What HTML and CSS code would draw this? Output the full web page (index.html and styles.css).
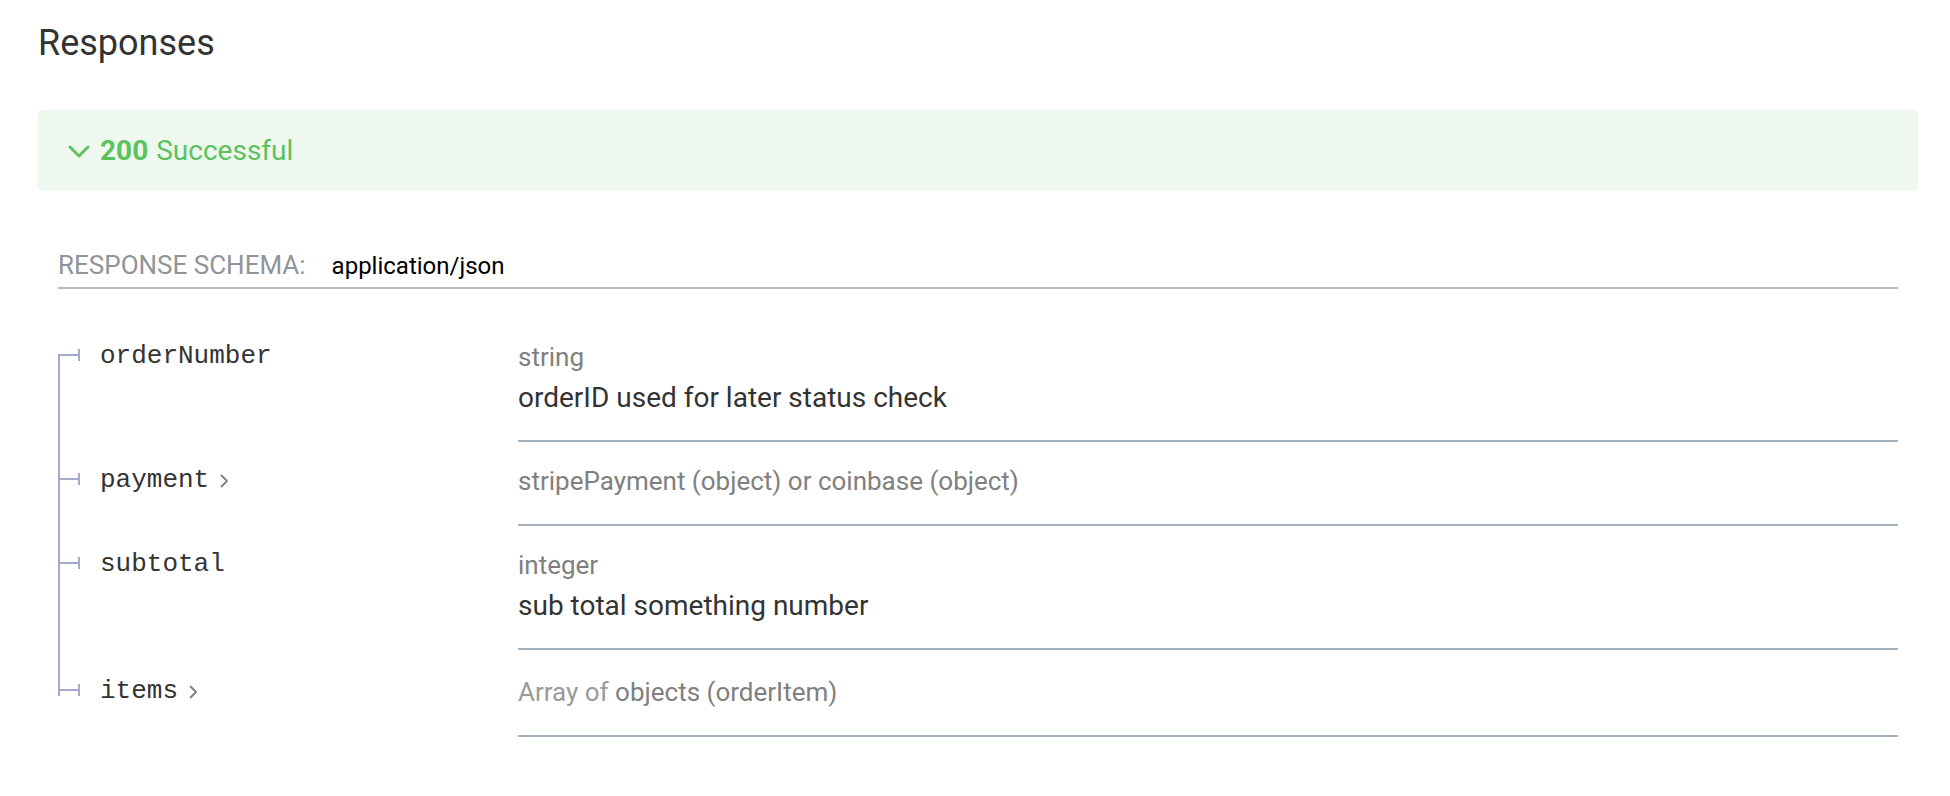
FILE: index.html
```html
<!DOCTYPE html>
<html>
<head>
<meta charset="utf-8">
<link rel="stylesheet" href="styles.css">
</head>
<body>
<div class="page">
  <h3 class="title">Responses</h3>
  <div class="resp-head">
    <svg class="chev" width="22" height="14" viewBox="0 0 22 14"><polyline points="2,2 11,11 20,2" fill="none" stroke="#5bc25e" stroke-width="3" stroke-linecap="round" stroke-linejoin="round"/></svg>
    <strong class="code">200</strong><span class="msg">Successful</span>
  </div>
  <div class="schema">
    <div class="schema-head">
      <span class="schema-label">RESPONSE SCHEMA:</span>
      <span class="schema-type">application/json</span>
    </div>
    <div class="fields">
      <div class="row first">
        <div class="name"><span class="pname">orderNumber</span></div>
        <div class="detail">
          <div class="type">string</div>
          <div class="desc">orderID used for later status check</div>
        </div>
      </div>
      <div class="row">
        <div class="name"><span class="pname">payment</span><svg class="arrow" width="11" height="16" viewBox="0 0 11 16"><polyline points="2.5,2.5 8,8 2.5,13.5" fill="none" stroke="#7d7d7d" stroke-width="1.8" stroke-linecap="round" stroke-linejoin="round"/></svg></div>
        <div class="detail">
          <div class="type">stripePayment (object) or coinbase (object)</div>
        </div>
      </div>
      <div class="row">
        <div class="name"><span class="pname">subtotal</span></div>
        <div class="detail">
          <div class="type">integer</div>
          <div class="desc">sub total something number</div>
        </div>
      </div>
      <div class="row last">
        <div class="name"><span class="pname">items</span><svg class="arrow" width="11" height="16" viewBox="0 0 11 16"><polyline points="2.5,2.5 8,8 2.5,13.5" fill="none" stroke="#7d7d7d" stroke-width="1.8" stroke-linecap="round" stroke-linejoin="round"/></svg></div>
        <div class="detail">
          <div class="type"><span class="muted">Array of </span>objects (orderItem)</div>
        </div>
      </div>
    </div>
  </div>
</div>
</body>
</html>
```

FILE: styles.css
```css
html, body {
  margin: 0;
  padding: 0;
  background: #ffffff;
}

body {
  font-family: Roboto, "Liberation Sans", sans-serif;
  color: #333333;
}

.page {
  padding: 21px 32px 0 38px;
}

.title {
  margin: 0;
  font-size: 36px;
  line-height: 44px;
  font-weight: 400;
  color: #333333;
}

.resp-head {
  margin-top: 45px;
  height: 81px;
  background: #eff8ef;
  border-radius: 4px;
  display: flex;
  align-items: center;
  padding-left: 30px;
  color: #5bc25e;
  font-size: 28px;
}

.chev {
  margin-right: 10px;
  margin-top: 2px;
}

.code {
  font-weight: 700;
  margin-right: 8px;
}

.msg {
  font-weight: 400;
}

.schema {
  padding: 0 20px;
}

.schema-head {
  margin-top: 59px;
  display: flex;
  align-items: baseline;
  line-height: 30px;
  padding-bottom: 6px;
  border-bottom: 2px solid #b8bcc1;
}

.schema-label {
  font-size: 26px;
  color: #8f9499;
  margin-right: 26px;
}

.schema-type {
  font-size: 24px;
  color: #000000;
}

.fields {
  margin-top: 29px;
}

.row {
  display: flex;
}

.name {
  width: 460px;
  flex: none;
  position: relative;
  box-sizing: border-box;
  padding: 22px 0 0 42px;
  display: flex;
  align-items: flex-start;
}

.last .name {
  padding-top: 25px;
}

.name::before {
  content: "";
  position: absolute;
  left: 0;
  top: 0;
  bottom: 0;
  width: 2px;
  background: #a6a8cc;
}

.first .name::before {
  top: 38px;
}

.last .name::before {
  bottom: auto;
  height: 46px;
}

.name::after {
  content: "";
  position: absolute;
  left: 0;
  top: 36px;
  width: 20px;
  height: 2px;
  background: #a6a8cc;
}

.last .name::after {
  top: 39px;
}

.pname {
  font-family: "Liberation Mono", "Courier New", monospace;
  font-size: 26px;
  line-height: 32px;
  color: #333333;
  position: relative;
}

.pname::before {
  content: "";
  position: absolute;
  left: -22px;
  top: 9px;
  width: 2px;
  height: 12px;
  background: #a6a8cc;
}

.arrow {
  margin-left: 10px;
  margin-top: 9px;
}

.detail {
  flex: 1;
  padding: 24px 0 28px 0;
  border-bottom: 2px solid #a3b3bd;
}

.last .detail {
  padding-top: 27px;
}

.type {
  font-size: 26px;
  line-height: 30px;
  color: #808080;
}

.muted {
  color: #9a9a9a;
}

.desc {
  margin-top: 10px;
  margin-bottom: -2px;
  font-size: 28px;
  line-height: 32px;
  color: #333333;
}
```
